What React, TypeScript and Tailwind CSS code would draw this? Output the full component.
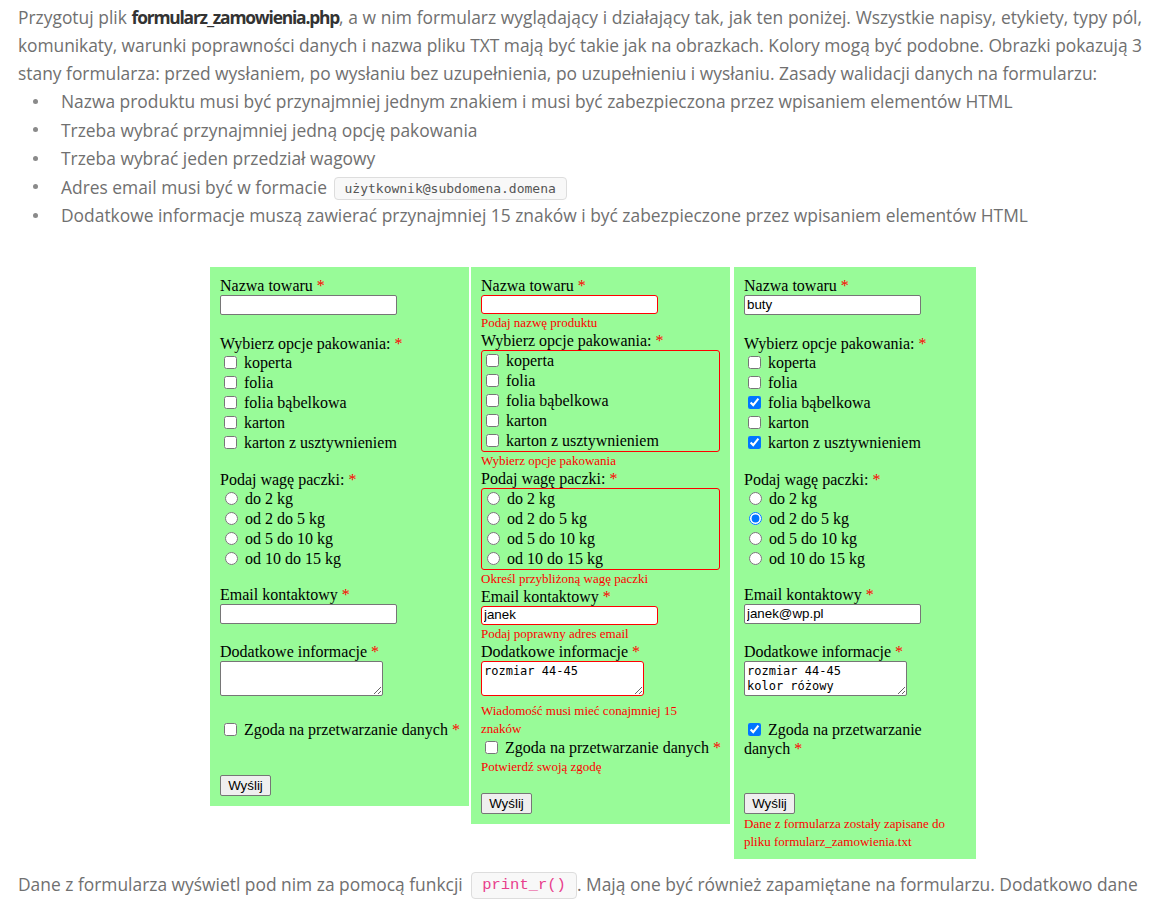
import React from "react";

type Mode = "empty" | "errors" | "sent";

const packing = ["koperta", "folia", "folia bąbelkowa", "karton", "karton z usztywnieniem"];
const weights = ["do 2 kg", "od 2 do 5 kg", "od 5 do 10 kg", "od 10 do 15 kg"];

function Req() {
  return <span className="text-[#ff0000]"> *</span>;
}

function Err({ children, className = "" }: { children: React.ReactNode; className?: string }) {
  return <div className={`text-[13px] leading-[18px] text-[#ff0000] ${className}`}>{children}</div>;
}

function TextInput({ value, invalid, height }: { value?: string; invalid?: boolean; height: string }) {
  return (
    <input
      type="text"
      readOnly
      value={value ?? ""}
      className={`block w-[177px] ${height} bg-white px-[2px] font-['Liberation_Sans',Arial,sans-serif] text-[13.33px] text-black outline-none ${
        invalid ? "rounded-[3px] border border-[#ff0000]" : "rounded-[2px] border border-[#767676]"
      }`}
    />
  );
}

function Check({ label, checked }: { label: string; checked?: boolean }) {
  return (
    <label className="flex h-[20px] items-center">
      <input type="checkbox" readOnly checked={!!checked} className="ml-[4px] mr-[3px] h-[13px] w-[13px]" />
      <span className="ml-[4px]">{label}</span>
    </label>
  );
}

function Radio({ label, checked, name }: { label: string; checked?: boolean; name: string }) {
  return (
    <label className="flex h-[20px] items-center">
      <input type="radio" name={name} readOnly checked={!!checked} className="ml-[5px] mr-[3px] h-[13px] w-[13px]" />
      <span className="ml-[4px]">{label}</span>
    </label>
  );
}

function Panel({ mode, width }: { mode: Mode; width: string }) {
  const errors = mode === "errors";
  const sent = mode === "sent";
  const name = `waga-${mode}`;
  return (
    <div className={`${width} bg-[#98fb98] px-[10px] pt-[10px] ${sent ? "pb-[8px]" : "pb-[10px]"} text-[16px] text-black`}>
      <div className="h-[18px] leading-[18px]">
        Nazwa towaru
        <Req />
      </div>
      <TextInput value={sent ? "buty" : ""} invalid={errors} height={errors ? "h-[19px]" : "h-[20px]"} />

      {errors ? <Err className="h-[18px]">Podaj nazwę produktu</Err> : <div className="h-[19px]" />}

      <div className={`${errors ? "h-[18px] leading-[18px]" : "h-[19px] leading-[19px]"}`}>
        Wybierz opcje pakowania:
        <Req />
      </div>
      <div className={errors ? "w-[239px] rounded-[3px] border border-[#ff0000]" : ""}>
        {packing.map((p, i) => (
          <Check key={p} label={p} checked={sent && (i === 2 || i === 4)} />
        ))}
      </div>

      {errors ? <Err className="h-[18px]">Wybierz opcje pakowania</Err> : <div className="h-[17px]" />}

      <div className={`${errors ? "h-[18px] leading-[18px]" : "h-[19px] leading-[19px]"}`}>
        Podaj wagę paczki:
        <Req />
      </div>
      <div className={errors ? "w-[239px] rounded-[3px] border border-[#ff0000]" : ""}>
        {weights.map((w, i) => (
          <Radio key={w} name={name} label={w} checked={sent && i === 1} />
        ))}
      </div>

      {errors ? <Err className="h-[18px]">Określ przybliżoną wagę paczki</Err> : <div className="h-[17px]" />}

      <div className="h-[18px] leading-[18px]">
        Email kontaktowy
        <Req />
      </div>
      <TextInput
        value={errors ? "janek" : sent ? "janek@wp.pl" : ""}
        invalid={errors}
        height={errors ? "h-[19px]" : "h-[20px]"}
      />

      {errors ? <Err className="h-[18px]">Podaj poprawny adres email</Err> : <div className="h-[18px]" />}

      <div className={`${errors ? "h-[18px] leading-[18px]" : "h-[19px] leading-[19px]"}`}>
        Dodatkowe informacje
        <Req />
      </div>
      <textarea
        readOnly
        value={errors ? "rozmiar 44-45" : sent ? "rozmiar 44-45\nkolor różowy" : ""}
        className={`block h-[35px] w-[163px] overflow-hidden bg-white px-[2px] py-[2px] font-['DejaVu_Sans_Mono','Liberation_Mono',monospace] text-[12px] leading-[15px] text-black outline-none ${
          errors ? "rounded-[3px] border border-[#ff0000]" : "rounded-[2px] border border-[#767676]"
        }`}
      />

      {errors ? (
        <>
          <div className="h-[6px]" />
          <Err className="max-w-[215px]">Wiadomość musi mieć conajmniej 15 znaków</Err>
        </>
      ) : (
        <div className="h-[24px]" />
      )}

      {sent ? (
        <div className="leading-[18px]">
          <label className="flex h-[20px] items-center">
            <input type="checkbox" readOnly checked className="ml-[4px] mr-[3px] h-[13px] w-[13px]" />
            <span className="ml-[4px]">Zgoda na przetwarzanie</span>
          </label>
          <div className="h-[18px]">
            danych
            <Req />
          </div>
        </div>
      ) : (
        <label className="flex h-[20px] items-center whitespace-nowrap">
          <input type="checkbox" readOnly className="ml-[4px] mr-[3px] h-[13px] w-[13px]" />
          <span className="ml-[4px]">
            Zgoda na przetwarzanie danych
            <Req />
          </span>
        </label>
      )}

      {errors ? (
        <>
          <Err className="h-[18px]">Potwierdź swoją zgodę</Err>
          <div className="h-[17px]" />
        </>
      ) : (
        <div className="h-[35px]" />
      )}

      <button
        type="button"
        className="block h-[21px] w-[51px] rounded-[2px] border border-[#767676] bg-[#efefef] font-['Liberation_Sans',Arial,sans-serif] text-[13.33px] leading-[19px] text-black"
      >
        Wyślij
      </button>

      {sent && (
        <Err className="mt-[1px]">
          Dane z formularza zostały zapisane do
          <br />
          pliku formularz_zamowienia.txt
        </Err>
      )}
    </div>
  );
}

function Bullet({ children }: { children: React.ReactNode }) {
  return (
    <li className="flex items-center">
      <span className="flex w-[33px] shrink-0">
        <span className="ml-[5px] h-[5px] w-[5px] rounded-full bg-[#8a8a8a]" />
      </span>
      <span>{children}</span>
    </li>
  );
}

export default function App() {
  return (
    <div className="h-[901px] overflow-hidden bg-white px-[18px] font-['Open_Sans','Noto_Sans',sans-serif] text-[17.4px] text-[#707070]">
      <p className="w-[1124px] whitespace-nowrap pt-[3px] leading-[28px]">
        <span className="block [text-align-last:justify]">
          Przygotuj plik{" "}
          <strong className="font-bold tracking-[-1.2px] text-[#333333]">formularz_zamowienia.php</strong>, a w nim
          formularz wyglądający i działający tak, jak ten poniżej. Wszystkie napisy, etykiety, typy pól,
        </span>
        <span className="block tracking-[-0.05px] [text-align-last:justify]">
          komunikaty, warunki poprawności danych i nazwa pliku TXT mają być takie jak na obrazkach. Kolory mogą być
          podobne. Obrazki pokazują 3
        </span>
        <span className="block">
          stany formularza: przed wysłaniem, po wysłaniu bez uzupełnienia, po uzupełnieniu i wysłaniu. Zasady walidacji
          danych na formularzu:
        </span>
      </p>
      <ul className="pl-[10px] leading-[28.5px]">
        <Bullet>Nazwa produktu musi być przynajmniej jednym znakiem i musi być zabezpieczona przez wpisaniem elementów HTML</Bullet>
        <Bullet>Trzeba wybrać przynajmniej jedną opcję pakowania</Bullet>
        <Bullet>Trzeba wybrać jeden przedział wagowy</Bullet>
        <Bullet>
          Adres email musi być w formacie{" "}
          <code className="ml-[2px] inline-block rounded-[4px] border border-[#dddddd] bg-[#f8f8f8] px-[10px] align-middle font-['DejaVu_Sans_Mono',monospace] text-[13px] leading-[21px] text-[#555555]">
            użytkownik@subdomena.domena
          </code>
        </Bullet>
        <Bullet>Dodatkowe informacje muszą zawierać przynajmniej 15 znaków i być zabezpieczone przez wpisaniem elementów HTML</Bullet>
      </ul>

      <div className="ml-[192px] mt-[37px] flex items-start font-['Liberation_Serif','Times_New_Roman',serif]">
        <Panel mode="empty" width="w-[259px]" />
        <div className="ml-[2px]">
          <Panel mode="errors" width="w-[259px]" />
        </div>
        <div className="ml-[4px]">
          <Panel mode="sent" width="w-[242px]" />
        </div>
      </div>

      <p className="mt-[11px] whitespace-nowrap leading-[28.6px]">
        Dane z formularza wyświetl pod nim za pomocą funkcji{" "}
        <code className="ml-[4px] inline-block rounded-[4px] border border-[#dddddd] bg-[#f8f8f8] px-[10px] align-middle font-['Liberation_Mono',monospace] text-[15.5px] leading-[25px] text-[#e83e8c]">
          print_r()
        </code>
        . Mają one być również zapamiętane na formularzu. Dodatkowo dane
      </p>
    </div>
  );
}
